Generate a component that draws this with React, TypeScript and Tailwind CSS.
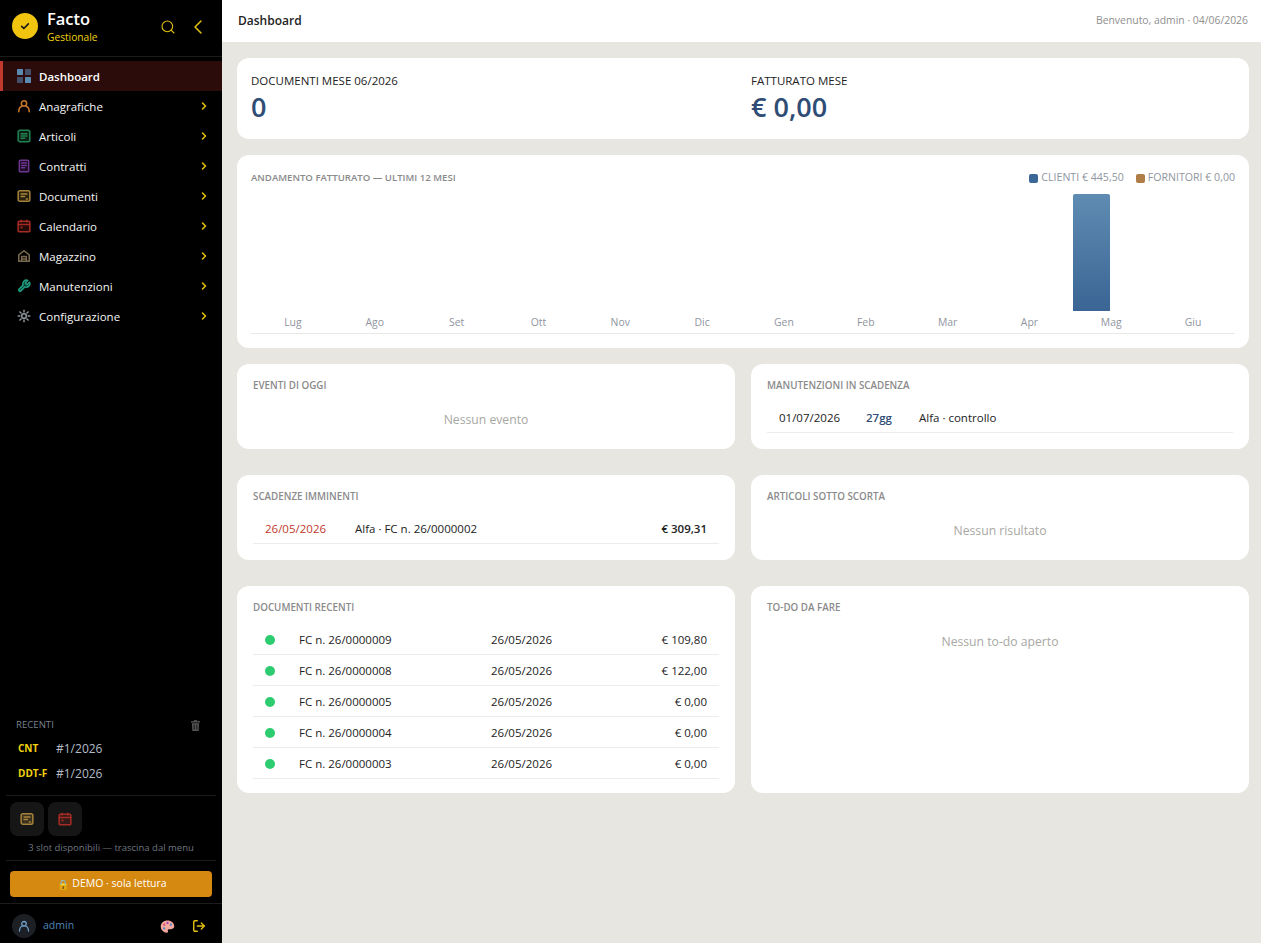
import type { ReactNode } from "react";
import { ChevronLeft, ChevronRight, LogOut, Search } from "lucide-react";

const font = "font-['Open_Sans','Noto_Sans',sans-serif]";

function Svg({ children, className }: { children: ReactNode; className: string }) {
    return (
        <svg
            viewBox="0 0 24 24"
            fill="none"
            stroke="currentColor"
            strokeWidth="2.6"
            strokeLinecap="round"
            strokeLinejoin="round"
            className={className}
        >
            {children}
        </svg>
    );
}

function DashIcon() {
    return (
        <svg viewBox="0 0 14 14" className="w-[14px] h-[14px]">
            <rect x="0" y="0" width="6" height="6" rx="0.5" fill="#5b8ab0" />
            <rect x="8" y="0" width="6" height="6" rx="0.5" fill="#44506a" />
            <rect x="0" y="8" width="6" height="6" rx="0.5" fill="#44506a" />
            <rect x="8" y="8" width="6" height="6" rx="0.5" fill="#5b8ab0" />
        </svg>
    );
}

function UserIcon({ className }: { className: string }) {
    return (
        <Svg className={className}>
            <circle cx="12" cy="7.5" r="4.5" />
            <path d="M3 22c0-5 3-9 6-10M21 22c0-5-3-9-6-10" />
        </Svg>
    );
}

function BoxLines({ className }: { className: string }) {
    return (
        <Svg className={className}>
            <rect x="2" y="2" width="20" height="20" rx="3" fill="currentColor" fillOpacity="0.25" />
            <path d="M7 8h10M7 12h10M7 16h6" />
        </Svg>
    );
}

function ContractIcon({ className }: { className: string }) {
    return (
        <Svg className={className}>
            <rect x="4" y="2" width="16" height="20" rx="2" fill="currentColor" fillOpacity="0.25" />
            <path d="M8 7h8M8 11h8M8 15h5" />
        </Svg>
    );
}

function DocIcon({ className }: { className: string }) {
    return (
        <Svg className={className}>
            <rect x="2" y="3" width="20" height="18" rx="3" fill="currentColor" fillOpacity="0.25" />
            <path d="M7 8.5h10M7 13h6M16 17h2" />
        </Svg>
    );
}

function CalIcon({ className }: { className: string }) {
    return (
        <Svg className={className}>
            <rect x="2" y="4" width="20" height="18" rx="2" fill="currentColor" fillOpacity="0.2" />
            <path d="M2 9.5h20M7 2v3M17 2v3" />
            <rect x="6" y="13" width="3.5" height="3" fill="currentColor" stroke="none" />
        </Svg>
    );
}

function HouseIcon({ className }: { className: string }) {
    return (
        <Svg className={className}>
            <path d="M3 21V10l9-7 9 7v11z" />
            <path d="M8 21v-8h8v8M8 17h8" />
        </Svg>
    );
}

function WrenchIcon({ className }: { className: string }) {
    return (
        <Svg className={className}>
            <path d="M14.7 6.3a1 1 0 0 0 0 1.4l1.6 1.6a1 1 0 0 0 1.4 0l3.77-3.77a6 6 0 0 1-7.94 7.94l-6.91 6.91a2.12 2.12 0 0 1-3-3l6.91-6.91a6 6 0 0 1 7.94-7.94l-3.76 3.76z" fill="currentColor" fillOpacity="0.35" />
        </Svg>
    );
}

function GearIcon({ className }: { className: string }) {
    return (
        <Svg className={className}>
            <circle cx="12" cy="12" r="4" />
            <path d="M12 2v3M12 19v3M2 12h3M19 12h3M5 5l2 2M17 17l2 2M5 19l2-2M17 7l2-2" />
        </Svg>
    );
}

function TrashIcon() {
    return (
        <svg viewBox="0 0 10 12" className="w-[9px] h-[11px]" fill="#555">
            <rect x="0" y="1.2" width="10" height="1.5" />
            <rect x="3.2" y="0" width="3.6" height="1.5" />
            <path d="M1 3.4h8l-.5 8.6h-7zM3 5v5.4h.9V5zm3.1 0v5.4H7V5z" fillRule="evenodd" />
        </svg>
    );
}

function PaletteIcon() {
    return (
        <svg viewBox="0 0 16 16" className="w-[15px] h-[15px]">
            <path
                d="M8 1.5C3.8 1.5.8 4.2.8 8c0 3.6 3 6.6 6.4 6.6 1.3 0 1.6-.9 1.2-1.8-.5-1 .1-2 1.2-2h2.2c1.9 0 3.4-1.1 3.4-3C15.2 4.2 12 1.5 8 1.5z"
                fill="#f4a9a0"
            />
            <circle cx="4.5" cy="6" r="1.2" fill="#d9486b" />
            <circle cx="8" cy="4.2" r="1.2" fill="#a33db5" />
            <circle cx="11.6" cy="6" r="1.2" fill="#4a86c8" />
            <circle cx="4.4" cy="10" r="1.2" fill="#4a86c8" />
        </svg>
    );
}

const menu = [
    { label: "Anagrafiche", icon: <UserIcon className="w-[14px] h-[14px] text-[#c9772b]" /> },
    { label: "Articoli", icon: <BoxLines className="w-[14px] h-[14px] text-[#22804f]" /> },
    { label: "Contratti", icon: <ContractIcon className="w-[14px] h-[14px] text-[#6d3490]" /> },
    { label: "Documenti", icon: <DocIcon className="w-[14px] h-[14px] text-[#a5823a]" /> },
    { label: "Calendario", icon: <CalIcon className="w-[14px] h-[14px] text-[#a52c25]" /> },
    { label: "Magazzino", icon: <HouseIcon className="w-[14px] h-[14px] text-[#7a6a4f]" /> },
    { label: "Manutenzioni", icon: <WrenchIcon className="w-[14px] h-[14px] text-[#1f9e82]" /> },
    { label: "Configurazione", icon: <GearIcon className="w-[14px] h-[14px] text-[#8a9399]" /> },
];

const months = ["Lug", "Ago", "Set", "Ott", "Nov", "Dic", "Gen", "Feb", "Mar", "Apr", "Mag", "Giu"];

const recentDocs = [
    ["FC n. 26/0000009", "€ 109,80"],
    ["FC n. 26/0000008", "€ 122,00"],
    ["FC n. 26/0000005", "€ 0,00"],
    ["FC n. 26/0000004", "€ 0,00"],
    ["FC n. 26/0000003", "€ 0,00"],
];

function CardTitle({ children }: { children: ReactNode }) {
    return <div className="text-[9.8px] font-semibold text-[#8a8a8a] uppercase leading-[14px] pt-[1px]">{children}</div>;
}

function Card({ title, children, className }: { title: string; children: ReactNode; className: string }) {
    return (
        <div className={`bg-white rounded-xl px-4 pt-[14px] ${className}`}>
            <CardTitle>{title}</CardTitle>
            {children}
        </div>
    );
}

function Empty({ children }: { children: ReactNode }) {
    return <div className="text-center text-[12.2px] text-[#a8a8a3] leading-[18px] mt-[18px]">{children}</div>;
}

function Sidebar() {
    return (
        <aside className="w-[222px] shrink-0 h-[943px] bg-black flex flex-col text-white">
            <div className="h-[57px] shrink-0 border-b border-[#1c1c1c] flex items-center pl-3 pr-3 pb-[2px]">
                <div className="w-[26px] h-[26px] mb-[2px] rounded-full bg-[#f1c40f] flex items-center justify-center">
                    <svg viewBox="0 0 12 12" className="w-[10px] h-[10px]" fill="none" stroke="#1a1a1a" strokeWidth="2" strokeLinecap="round" strokeLinejoin="round">
                        <path d="M2 6.5l2.6 2.5L10 3.5" />
                    </svg>
                </div>
                <div className="ml-[9px] flex-1">
                    <div className="text-[16.5px] font-semibold leading-[20px]">Facto</div>
                    <div className="text-[10.2px] text-[#f1d20f] leading-[16px]">Gestionale</div>
                </div>
                <Search className="w-4 h-4 text-[#e6c20f] mr-[10px]" strokeWidth={1.6} />
                <ChevronLeft className="w-6 h-6 text-[#e6c20f] mb-[1px]" strokeWidth={1.5} />
            </div>
            <nav className="pt-1">
                <div className="h-[30px] bg-[#2c0c0a] border-l-[3px] border-[#c0392b] flex items-center pl-[14px] gap-2">
                    <DashIcon />
                    <span className="text-[11.5px] font-semibold pt-[2px]">Dashboard</span>
                </div>
                {menu.map((m) => (
                    <div key={m.label} className="h-[30px] flex items-center pl-[17px] pr-3 gap-2">
                        {m.icon}
                        <span className="text-[11.5px] flex-1 text-[#f5f5f5] pt-[2px]">{m.label}</span>
                        <ChevronRight className="w-3 h-3 text-[#e6c20f]" strokeWidth={3} />
                    </div>
                ))}
            </nav>
            <div className="flex-1" />
            <div className="px-4 flex items-center justify-between h-[16px] pr-[22px]">
                <span className="text-[9.6px] text-[#777f8c]">RECENTI</span>
                <TrashIcon />
            </div>
            <div className="mt-[3px] pb-[9px] border-b border-[#1c1c1c] mx-[6px]">
                {["CNT", "DDT-F"].map((t) => (
                    <div key={t} className="h-[25px] flex items-center pl-3">
                        <span className="w-[38px] text-[10px] font-bold text-[#f1d20f]">{t}</span>
                        <span className="text-[12px] text-[#b4bcc6]">#1/2026</span>
                    </div>
                ))}
            </div>
            <div className="flex gap-1 px-[10px] pt-[6px]">
                <div className="w-[34px] h-[34px] rounded-lg bg-[#161616] flex items-center justify-center">
                    <DocIcon className="w-[14px] h-[14px] text-[#a5823a]" />
                </div>
                <div className="w-[34px] h-[34px] rounded-lg bg-[#161616] flex items-center justify-center">
                    <CalIcon className="w-[14px] h-[14px] text-[#a52c25]" />
                </div>
            </div>
            <div className="text-center text-[9.5px] text-[#6f7680] mt-[5px] h-[20px] leading-[13px] border-b border-[#1c1c1c] mx-[6px]">
                3 slot disponibili — trascina dal menu
            </div>
            <div className="px-[10px] pt-[10px] pb-[6px] border-b border-[#1c1c1c]">
                <div className="h-[26px] rounded bg-[#d68910] flex items-center justify-center text-[10.5px] gap-[3px] pl-[2px]">
                    <span className="text-[10px]">🔒</span>
                    <span>DEMO · sola lettura</span>
                </div>
            </div>
            <div className="h-[39px] flex items-center pl-3 pr-4 pt-[5px]">
                <div className="w-6 h-6 rounded-full bg-[#1c1f24] flex items-center justify-center">
                    <UserIcon className="w-3 h-3 text-[#6f9fc8]" />
                </div>
                <span className="ml-[7px] text-[10.5px] text-[#4f86b8] flex-1">admin</span>
                <span className="mr-[17px]"><PaletteIcon /></span>
                <LogOut className="w-[14px] h-[14px] text-[#e6c20f]" strokeWidth={2.4} />
            </div>
        </aside>
    );
}

export default function App() {
    return (
        <div className={`flex h-[943px] overflow-hidden bg-[#e8e6e1] ${font}`}>
            <Sidebar />
            <main className="flex-1 min-w-0">
                <header className="h-[42px] bg-white flex items-center justify-between pl-4 pr-[13px]">
                    <h1 className="text-[12px] font-semibold text-[#222]">Dashboard</h1>
                    <span className="text-[10.4px] text-[#8f8f8f]">Benvenuto, admin · 04/06/2026</span>
                </header>
                <div className="pt-4 px-3 pl-[15px] flex flex-col">
                    <div className="bg-white rounded-xl h-[81px] grid grid-cols-2 gap-x-4 px-[14px] pt-4">
                        <div>
                            <div className="text-[11.5px] text-[#222] leading-[14px]">DOCUMENTI MESE 06/2026</div>
                            <div className="text-[27px] font-semibold text-[#2f4d75] leading-[32px] mt-[3px]">0</div>
                        </div>
                        <div>
                            <div className="text-[11.5px] text-[#222] leading-[14px]">FATTURATO MESE</div>
                            <div className="text-[27px] font-semibold text-[#2f4d75] leading-[32px] mt-[3px]">€ 0,00</div>
                        </div>
                    </div>

                    <div className="bg-white rounded-xl h-[193px] mt-4 px-[14px] pt-[16px]">
                        <div className="flex justify-between items-center h-[14px]">
                            <div className="text-[9.6px] font-semibold text-[#8a8a8a] uppercase leading-[14px]">Andamento fatturato — ultimi 12 mesi</div>
                            <div className="flex items-center gap-3 text-[10.6px] text-[#8f95a0]">
                                <span className="flex items-center gap-[3px]"><i className="w-[9px] h-[9px] rounded-[2px] bg-[#3a6795]" />CLIENTI € 445,50</span>
                                <span className="flex items-center gap-[3px]"><i className="w-[9px] h-[9px] rounded-[2px] bg-[#b07d46]" />FORNITORI € 0,00</span>
                            </div>
                        </div>
                        <div className="mt-[9px] border-b border-[#e8e8e8] grid grid-cols-12 px-[1px]">
                            {months.map((m) => (
                                <div key={m} className="flex flex-col items-center">
                                    <div className="h-[117px] w-full flex items-end justify-start pl-[3px]">
                                        {m === "Mag" && <div className="w-[37px] h-[117px] rounded-t-[2px] bg-gradient-to-b from-[#5f8cb2] to-[#3a6594]" />}
                                    </div>
                                    <div className="text-[10.4px] text-[#8f95a0] h-[22px] leading-[23px]">{m}</div>
                                </div>
                            ))}
                        </div>
                    </div>

                    <div className="grid grid-cols-2 gap-4 mt-4">
                        <Card title="Eventi di oggi" className="h-[85px]">
                            <Empty>Nessun evento</Empty>
                        </Card>
                        <Card title="Manutenzioni in scadenza" className="h-[85px]">
                            <div className="flex items-center h-[31px] pt-[1px] border-b border-[#ececec] text-[11.5px] pl-3 mt-[9px] text-[#222]">
                                <span className="w-[87px]">01/07/2026</span>
                                <span className="w-[53px] font-semibold text-[#2f4d75]">27gg</span>
                                <span>Alfa · controllo</span>
                            </div>
                        </Card>
                    </div>

                    <div className="grid grid-cols-2 gap-4 mt-[26px]">
                        <Card title="Scadenze imminenti" className="h-[85px]">
                            <div className="flex items-center h-[31px] pt-[1px] border-b border-[#ececec] text-[11.5px] px-3 mt-[9px] text-[#222]">
                                <span className="w-[90px] text-[#c0392b]">26/05/2026</span>
                                <span className="flex-1">Alfa · FC n. 26/0000002</span>
                                <span className="font-semibold">€ 309,31</span>
                            </div>
                        </Card>
                        <Card title="Articoli sotto scorta" className="h-[85px]">
                            <Empty>Nessun risultato</Empty>
                        </Card>
                    </div>

                    <div className="grid grid-cols-2 gap-4 mt-[26px]">
                        <Card title="Documenti recenti" className="h-[207px]">
                            <div className="mt-[9px]">
                                {recentDocs.map((d) => (
                                    <div key={d[0]} className="flex items-center h-[31px] pt-[1px] border-b border-[#ececec] text-[11.5px] px-3 text-[#222]">
                                        <span className="w-[34px]"><i className="block w-[10px] h-[10px] mt-[1px] rounded-full bg-[#2ecc71]" /></span>
                                        <span className="w-[192px]">{d[0]}</span>
                                        <span className="flex-1">26/05/2026</span>
                                        <span>{d[1]}</span>
                                    </div>
                                ))}
                            </div>
                        </Card>
                        <Card title="To-do da fare" className="h-[207px]">
                            <Empty>Nessun to-do aperto</Empty>
                        </Card>
                    </div>
                </div>
            </main>
        </div>
    );
}
